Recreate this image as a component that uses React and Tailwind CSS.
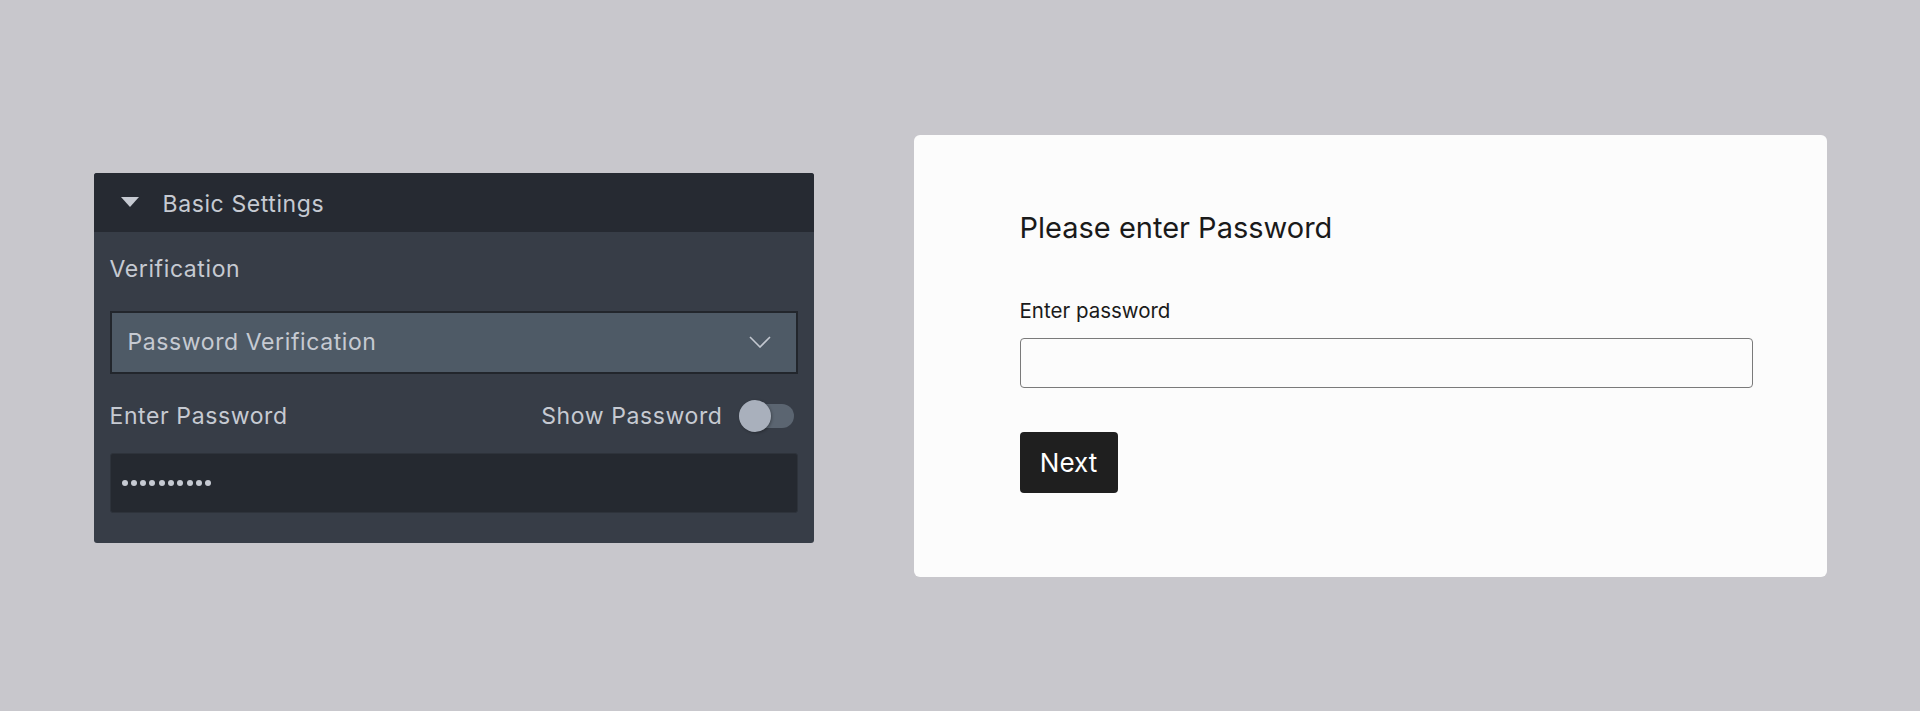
import { useState } from "react";

function Chevron() {
  return (
    <svg width="22" height="12" viewBox="0 0 22 12" fill="none">
      <path d="M1 1l10 10L21 1" stroke="#c3c8d0" strokeWidth="1.6" />
    </svg>
  );
}

function SettingsPanel() {
  const [show, setShow] = useState(false);

  return (
    <div className="mt-[4px] w-[720px] rounded-[3px] bg-[#373d47] overflow-hidden font-['Inter',sans-serif] text-[23px] tracking-[0.6px] text-[#c6cad2]">
      {/* header */}
      <div className="flex h-[59px] items-center bg-[#262a32] pl-[27px]">
        <span className="mr-[24px] h-0 w-0 border-x-[9px] border-t-[10px] border-x-transparent border-t-[#c6cad2]" />
        <span className="pt-[4px]">Basic Settings</span>
      </div>

      <div className="px-4 pt-[21px] pb-[30px]">
        <div className="leading-[32px]">Verification</div>

        <div className="mt-[26px] flex h-[63px] items-center justify-between border-2 border-[#22262c] bg-[#4e5a66] pl-4 pr-[25px]">
          <span>Password Verification</span>
          <Chevron />
        </div>

        <div className="mt-[26px] flex h-[32px] items-center justify-between">
          <span className="pt-[2px]">Enter Password</span>
          <div className="flex items-center">
            <span className="mr-4 pt-[2px]">Show Password</span>
            <button
              onClick={() => setShow(!show)}
              className="relative mr-[4px] h-[24px] w-[55px] rounded-full bg-[#5b6571]"
            >
              <span className="absolute -top-[4px] left-0 h-[32px] w-[32px] rounded-full bg-[#a9b0bc] shadow-[1px_1px_3px_rgba(0,0,0,0.3)]" />
            </button>
          </div>
        </div>

        <div className="mt-[21px] flex h-[60px] items-center rounded-[3px] border border-[#2e333b] bg-[#252930] pl-[11px]">
          <div className="flex gap-[3.3px]">
            {Array.from({ length: 10 }).map((_, i) => (
              <span key={i} className="h-[6px] w-[6px] rounded-full bg-[#c6cad2]" />
            ))}
          </div>
        </div>
      </div>
    </div>
  );
}

function PasswordCard() {
  return (
    <div className="w-[913px] rounded-[6px] bg-[#fcfcfc] pl-[106px] pt-[75px] pb-[84px] font-['Inter',sans-serif] text-[#1a1a1a]">
      <h2 className="text-[29px] leading-[36px]">Please enter Password</h2>
      <div className="mt-[51px] text-[20.5px] leading-[28px]">Enter password</div>
      <input
        type="password"
        className="mt-[13px] block h-[50px] w-[733px] rounded-[4px] border border-[#7a7a7a] bg-transparent outline-none"
      />
      <button className="mt-[44px] flex h-[61px] w-[98px] items-center justify-center rounded-[4px] bg-[#1f1f1f] text-[26px] text-white">
        Next
      </button>
    </div>
  );
}

export default function App() {
  return (
    <div className="flex h-[711px] w-full items-center justify-center gap-[100px] bg-[#c8c7cc]">
      <SettingsPanel />
      <PasswordCard />
    </div>
  );
}
